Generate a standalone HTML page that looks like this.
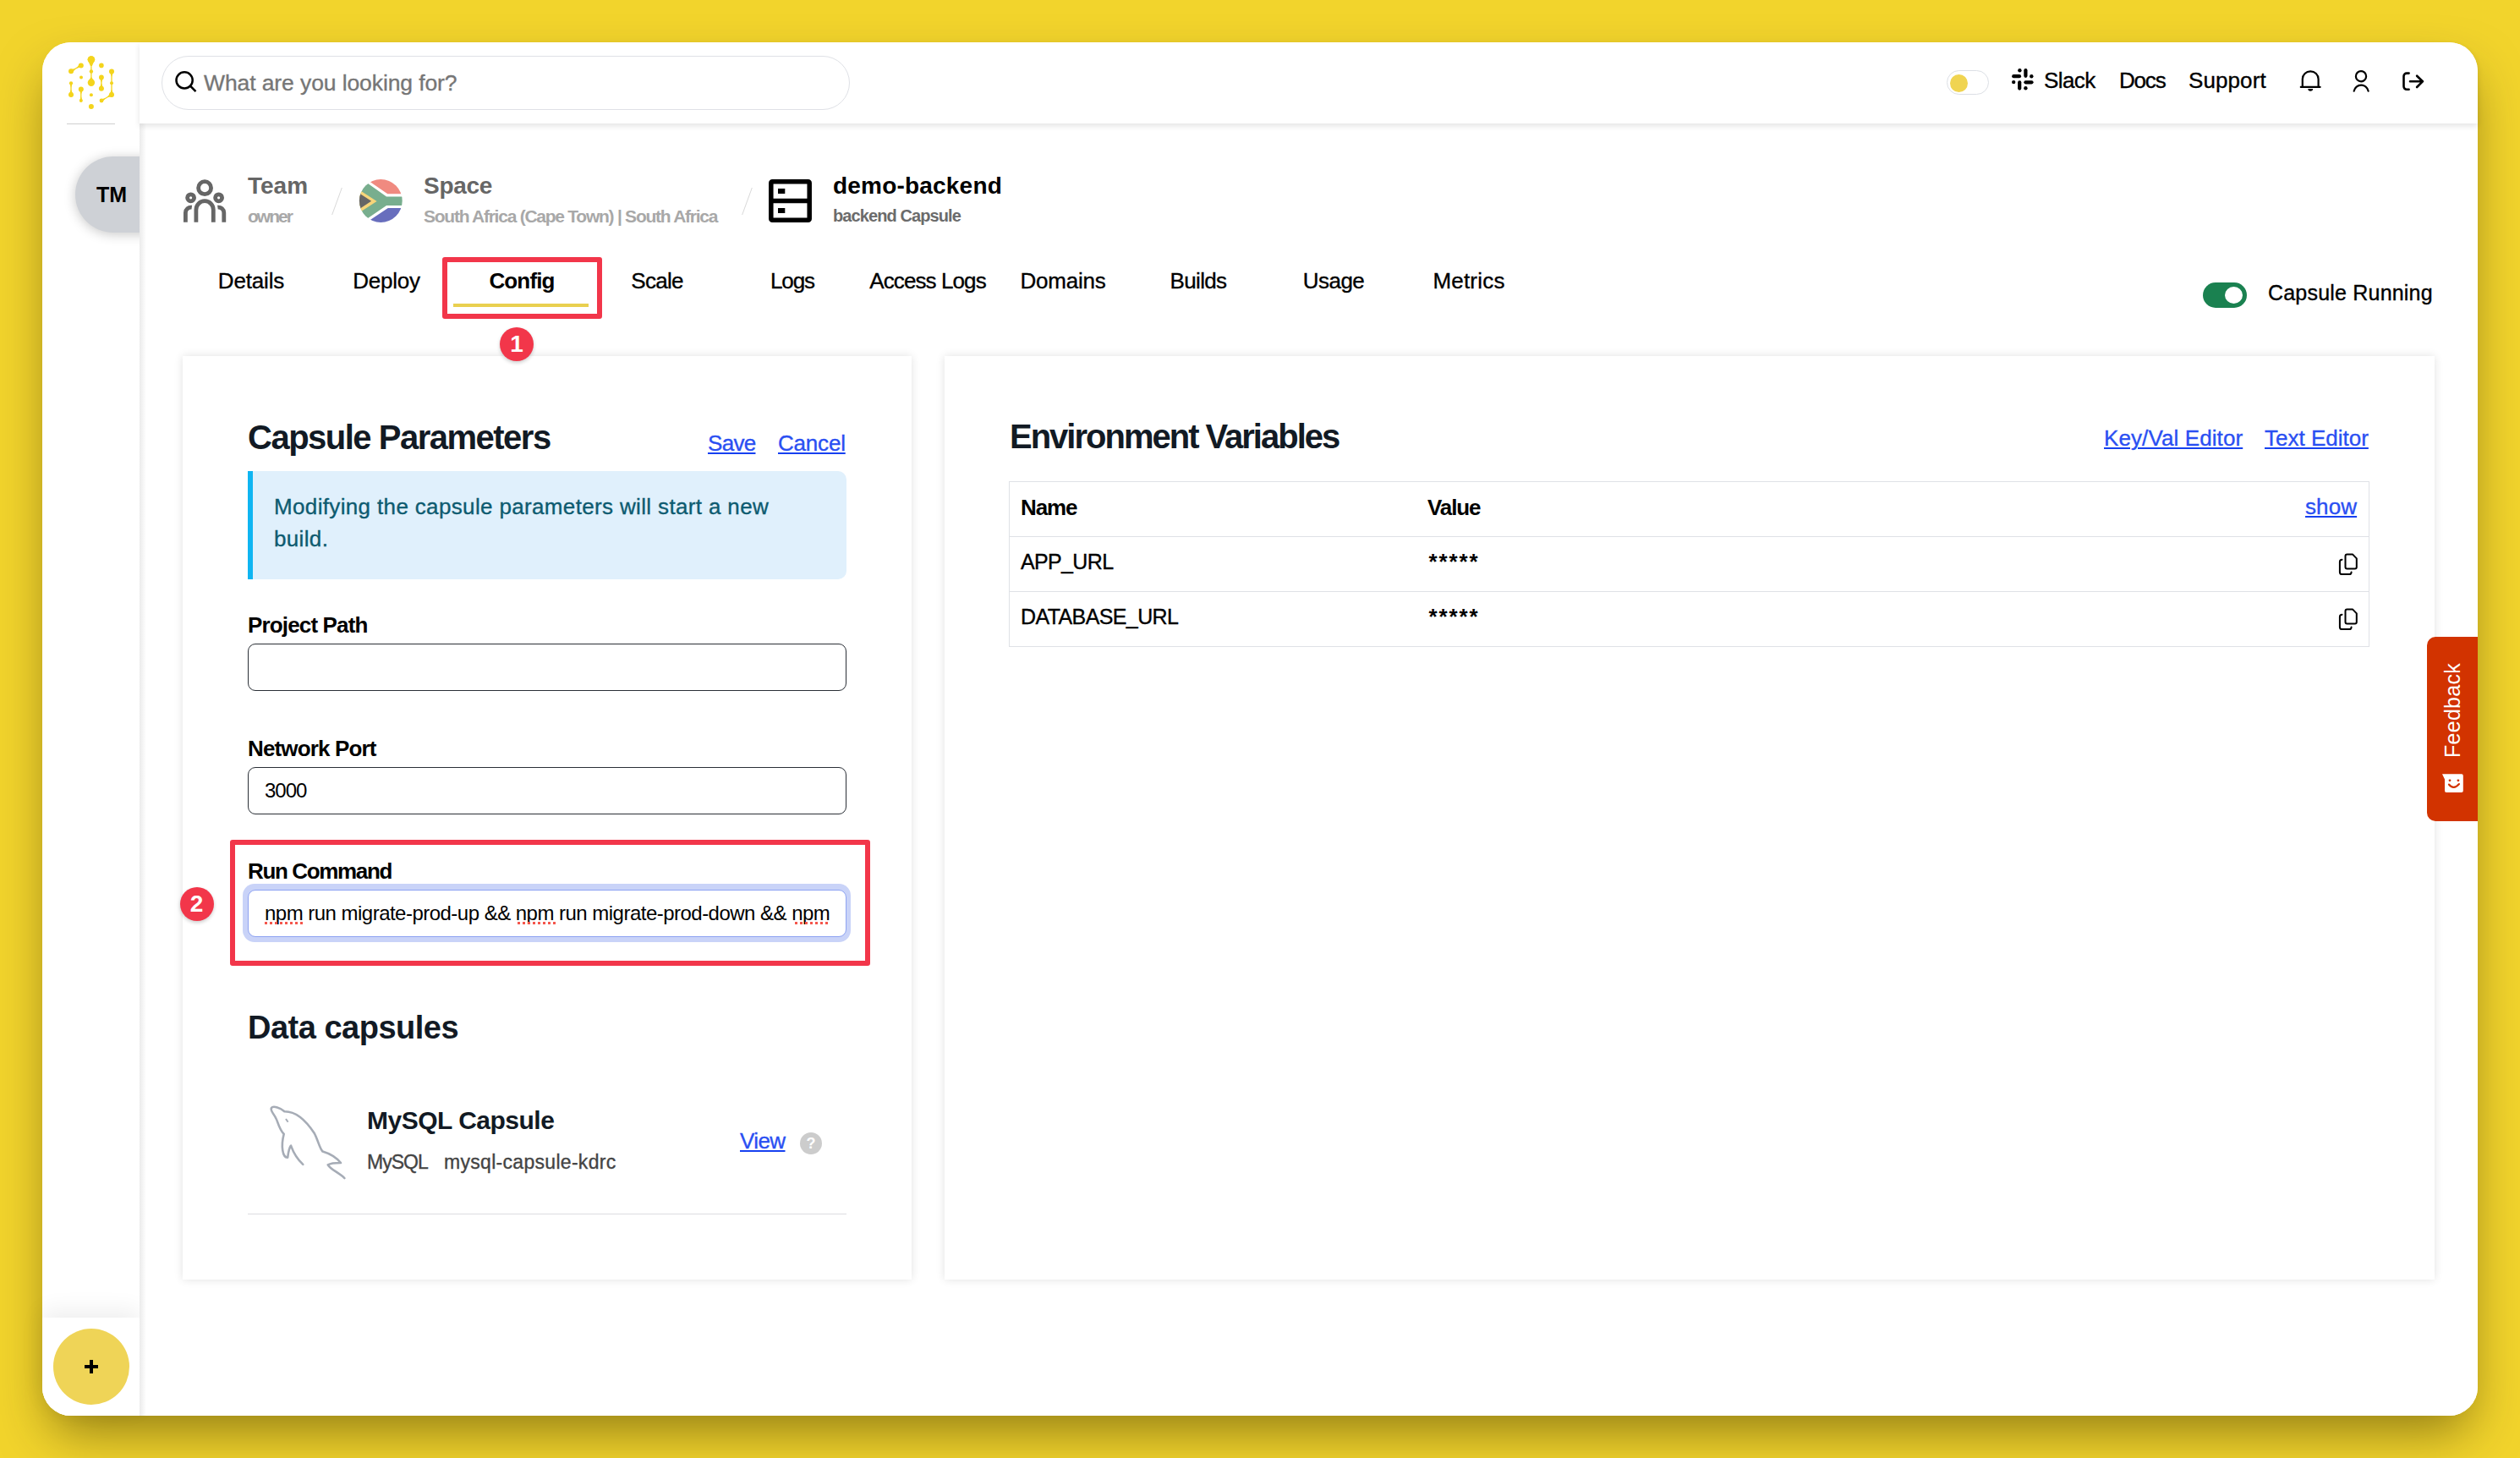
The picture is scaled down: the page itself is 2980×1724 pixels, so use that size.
<!DOCTYPE html>
<html><head><meta charset="utf-8">
<style>
html,body{margin:0;padding:0}
body{width:2980px;height:1724px;overflow:hidden;background:#f2d42c;position:relative;font-family:"Liberation Sans",sans-serif;color:#111}
.a{position:absolute}
.t{position:absolute;white-space:nowrap;line-height:1;font-family:"Liberation Sans",sans-serif}
.b{font-weight:700}
.t:not(.b){-webkit-text-stroke:0.35px currentColor}
.win{left:50px;top:50px;width:2880px;height:1624px;border-radius:34px;background:#fff;box-shadow:0 28px 60px -10px rgba(50,40,0,.5)}
.side{left:50px;top:50px;width:115px;height:1624px;border-radius:34px 0 0 34px;background:#fff}
.hdr{left:165px;top:50px;width:2765px;height:96px;background:#fff;border-radius:0 34px 0 0;box-shadow:0 3px 7px rgba(0,0,0,.11)}
.card{background:#fff;box-shadow:0 0 10px rgba(0,0,0,.12)}
.lnk{color:#2a4ff2;text-decoration:underline;text-decoration-color:#1640f0;text-decoration-thickness:2px;text-underline-offset:2px}
</style></head><body>
<div class="a win"></div>
<div class="a side"></div>
<!-- SIDEBAR -->
<svg class="a" style="left:70px;top:56px" width="80" height="80" viewBox="70 56 80 80">
<g fill="#f4d41c" stroke="#f4d41c">
<line x1="107.9" y1="70.5" x2="107.9" y2="98" stroke-width="1.3"/>
<line x1="95.8" y1="77.4" x2="84" y2="84.3" stroke-width="1.3"/>
<line x1="119.9" y1="91.4" x2="119.9" y2="104.8" stroke-width="1.3"/>
<line x1="132" y1="84.5" x2="132" y2="112" stroke-width="1.3"/>
<line x1="132" y1="112" x2="120" y2="119" stroke-width="1.3"/>
<line x1="84" y1="98.3" x2="84" y2="112" stroke-width="1.3"/>
<line x1="95.8" y1="105.4" x2="95.8" y2="119" stroke-width="1.3"/>
<g stroke="none">
<path d="M103.6 70.5 A4.3 4.3 0 1 1 112.2 70.5 L108.9 78 L106.9 78 Z"/>
<circle cx="107.9" cy="70.5" r="4.3"/>
<circle cx="107.9" cy="84.5" r="2.2"/>
<circle cx="107.9" cy="97.8" r="4.2"/>
<path d="M105 95 L107.9 91 L110.8 95 Z"/>
<circle cx="95.8" cy="77.4" r="3"/>
<circle cx="84" cy="84.3" r="3"/>
<circle cx="96" cy="91.4" r="2"/>
<circle cx="119.9" cy="77.4" r="2.8"/>
<circle cx="119.9" cy="91.4" r="2.9"/>
<circle cx="119.9" cy="104.8" r="3"/>
<circle cx="132" cy="84.5" r="3"/>
<circle cx="132" cy="98.3" r="2"/>
<circle cx="132" cy="112" r="3"/>
<circle cx="120" cy="119" r="2.4"/>
<circle cx="84" cy="98.3" r="2.1"/>
<circle cx="84" cy="112" r="3"/>
<circle cx="95.8" cy="105.4" r="3"/>
<circle cx="95.8" cy="119" r="2"/>
<circle cx="107.9" cy="112.2" r="2"/>
<circle cx="107.9" cy="126" r="3"/>
<polygon points="94.51,75.20 90.45,80.53 97.09,79.60"/>
<polygon points="85.29,86.50 89.35,81.17 82.71,82.10"/>
<polygon points="117.44,91.40 119.90,97.50 122.37,91.40"/>
<polygon points="122.45,104.80 119.90,98.60 117.35,104.80"/>
<polygon points="129.45,84.50 132.00,90.70 134.55,84.50"/>
<polygon points="134.55,112.00 132.00,105.80 129.45,112.00"/>
<polygon points="130.72,109.80 126.64,115.12 133.28,114.20"/>
<polygon points="121.03,120.76 124.84,116.18 118.97,117.24"/>
<polygon points="82.22,98.30 84.00,103.60 85.78,98.30"/>
<polygon points="86.55,112.00 84.00,105.80 81.45,112.00"/>
<polygon points="93.25,105.40 95.80,111.60 98.35,105.40"/>
<polygon points="97.50,119.00 95.80,113.80 94.10,119.00"/>
</g></g></svg>
<div class="a" style="left:79px;top:146px;width:57px;height:1px;background:#cfcfcf"></div>
<div class="a" style="left:89px;top:185px;width:110px;height:90px;border-radius:45px 0 0 45px;background:#ced1d6;box-shadow:0 2px 14px rgba(0,0,0,.22)"></div>
<div class="t b" style="left:114px;top:217.8px;font-size:25px;color:#000">TM</div>
<div class="a" style="left:50px;top:1558px;width:115px;height:116px;border-radius:0 0 0 34px;background:#fff;box-shadow:0 -8px 28px rgba(0,0,0,.07)"></div>
<div class="a" style="left:63px;top:1571px;width:90px;height:90px;border-radius:45px;background:#efd457"></div>
<div class="a" style="left:100px;top:1614px;width:16px;height:3.5px;background:#000"></div>
<div class="a" style="left:106.3px;top:1607.5px;width:3.5px;height:16px;background:#000"></div>

<!-- MAIN BG (covers avatar overflow) -->
<div class="a" style="left:165px;top:146px;width:2765px;height:1528px;background:#fff;border-radius:0 0 34px 0"></div>
<div class="a" style="left:165px;top:146px;width:8px;height:1528px;background:linear-gradient(90deg,#ebebeb,rgba(255,255,255,0))"></div>

<!-- HEADER -->
<div class="a hdr"></div>
<div class="a" style="left:191px;top:66px;width:814px;height:64px;box-sizing:border-box;border:1.5px solid #dfe1e6;border-radius:32px;background:#fff"></div>
<svg class="a" style="left:195px;top:70px" width="50" height="50" viewBox="195 70 50 50"><circle cx="218.1" cy="94.9" r="9.6" fill="none" stroke="#000" stroke-width="2.5"/><line x1="225.3" y1="102" x2="230.6" y2="107.3" stroke="#000" stroke-width="2.5" stroke-linecap="square"/></svg>
<div class="t" style="left:241px;top:84.6px;font-size:26.5px;color:#767676;letter-spacing:-0.1px">What are you looking for?</div>

<div class="a" style="left:2302px;top:83px;width:50px;height:29px;box-sizing:border-box;border:1px solid #dcdfe5;border-radius:15px;background:#fff"></div>
<div class="a" style="left:2306px;top:88px;width:21px;height:21px;border-radius:50%;background:#f0d451"></div>
<svg class="a" style="left:2370px;top:70px" width="50" height="50" viewBox="0 0 50 50"><g stroke="#000" stroke-width="4.2" stroke-linecap="round" fill="#000">
<line x1="25.4" y1="13.2" x2="25.4" y2="19.8"/>
<line x1="11.2" y1="20.2" x2="18" y2="20.2"/>
<line x1="18.2" y1="27.3" x2="18.2" y2="34.6"/>
<line x1="25.4" y1="27.3" x2="32.5" y2="27.3"/>
<circle cx="18.4" cy="13.2" r="2.2" stroke="none"/>
<circle cx="32.3" cy="20.2" r="2.2" stroke="none"/>
<circle cx="11.2" cy="27.1" r="2.2" stroke="none"/>
<circle cx="25.4" cy="34.3" r="2.2" stroke="none"/>
</g></svg>
<div class="t" style="left:2417px;top:82px;font-size:26px;color:#000;letter-spacing:-0.6px">Slack</div>
<div class="t" style="left:2506px;top:82px;font-size:26px;color:#000;letter-spacing:-1.2px">Docs</div>
<div class="t" style="left:2588px;top:82px;font-size:26px;color:#000;letter-spacing:0.1px">Support</div>
<svg class="a" style="left:2710px;top:70px" width="170" height="50" viewBox="0 0 170 50"><g fill="none" stroke="#000" stroke-width="2.2" stroke-linecap="round" stroke-linejoin="round">
<path d="M12.8 32.2 V23.5 A9.4 9.2 0 0 1 31.6 23.5 V32.2 M10.8 32.9 H33.6"/>
<path d="M19.3 35 H25.1 A2.9 2.7 0 0 1 19.3 35 Z" fill="#000" stroke="none"/>
<circle cx="82" cy="20.2" r="6.1"/>
<path d="M73.7 37.6 A8.6 8.6 0 0 1 90.6 37.6"/>
<path d="M138.6 16.6 H136 A3.5 3.5 0 0 0 132.5 20.1 V32.3 A3.5 3.5 0 0 0 136 35.8 H138.6" stroke-width="2.6"/>
<path d="M140 26.3 H155 M148.1 19.7 L154.8 26.3 L148.1 33" stroke-width="2.6"/>
</g></svg>

<!-- BREADCRUMB -->
<svg class="a" style="left:210px;top:205px" width="65" height="65" viewBox="0 0 65 65"><g fill="none" stroke="#666" stroke-width="4.8">
<circle cx="32.1" cy="17.2" r="7.5"/>
<circle cx="15.6" cy="28.8" r="4"/>
<circle cx="48.6" cy="28.8" r="4"/>
<path d="M21.9 57.7 V42.9 A10.2 10.2 0 0 1 42.3 42.9 V57.7"/>
<path d="M9.4 57.7 V46.5 A6.5 6.5 0 0 1 16.8 40.2"/>
<path d="M54.8 57.7 V46.5 A6.5 6.5 0 0 0 47.4 40.2"/>
</g></svg>
<div class="t b" style="left:293px;top:206.3px;font-size:28px;color:#666">Team</div>
<div class="t b" style="left:293px;top:245.2px;font-size:21px;color:#a8a8a8;letter-spacing:-2px">owner</div>
<div class="a" style="left:398px;top:222px;width:1px;height:32px;background:#d8d8d8;transform:skewX(-20deg)"></div>
<svg class="a" style="left:420px;top:205px" width="65" height="65" viewBox="0 0 65 65">
<defs><clipPath id="fc"><circle cx="30.3" cy="32.5" r="25.4"/></clipPath></defs>
<g clip-path="url(#fc)">
<rect x="0" y="0" width="65" height="65" fill="#fff"/>
<polygon points="3.1,0 38.3,24.3 65,24.3 65,0" fill="#f08a80"/>
<polygon points="2.8,65 38.8,41 65,41 65,65" fill="#686ebd"/>
<polygon points="0,1.3 37,27.4 65,27.4 65,37.9 37,37.9 0,63.4" fill="#78ae8e"/>
<polygon points="0,16.4 25.6,33 0,49.6" fill="#f7d57a"/>
<polygon points="0,20.3 19.2,32.8 0,45.3" fill="#666"/>
</g></svg>
<div class="t b" style="left:501px;top:206.3px;font-size:28px;color:#666;letter-spacing:-0.3px">Space</div>
<div class="t b" style="left:501px;top:245.2px;font-size:21px;color:#a8a8a8;letter-spacing:-1.25px">South Africa (Cape Town) | South Africa</div>
<div class="a" style="left:883px;top:222px;width:1px;height:32px;background:#d8d8d8;transform:skewX(-20deg)"></div>
<svg class="a" style="left:905px;top:208px" width="60" height="60" viewBox="0 0 60 60"><g fill="none" stroke="#000" stroke-width="5.5" stroke-linejoin="round">
<rect x="6.8" y="6.8" width="45.4" height="45.4" rx="1.5"/>
<line x1="6.8" y1="29.5" x2="52.2" y2="29.5"/>
</g><rect x="15" y="15" width="8.3" height="6" fill="#000"/><rect x="15" y="38" width="8.3" height="6" fill="#000"/></svg>
<div class="t b" style="left:985px;top:206.3px;font-size:28px;color:#000;letter-spacing:0.2px">demo-backend</div>
<div class="t b" style="left:985px;top:245.1px;font-size:20px;color:#6b6b6b;letter-spacing:-0.9px">backend Capsule</div>

<!-- TABS -->
<div class="t" style="left:217px;top:319px;width:160px;text-align:center;font-size:26px;color:#000;letter-spacing:-0.15px">Details</div>
<div class="t" style="left:377px;top:319px;width:160px;text-align:center;font-size:26px;color:#000;letter-spacing:-0.2px">Deploy</div>
<div class="t b" style="left:537px;top:319px;width:160px;text-align:center;font-size:26px;color:#000;letter-spacing:-0.85px">Config</div>
<div class="t" style="left:697px;top:319px;width:160px;text-align:center;font-size:26px;color:#000;letter-spacing:-0.75px">Scale</div>
<div class="t" style="left:857px;top:319px;width:160px;text-align:center;font-size:26px;color:#000;letter-spacing:-1.1px">Logs</div>
<div class="t" style="left:1017px;top:319px;width:160px;text-align:center;font-size:26px;color:#000;letter-spacing:-0.9px">Access Logs</div>
<div class="t" style="left:1177px;top:319px;width:160px;text-align:center;font-size:26px;color:#000;letter-spacing:-0.25px">Domains</div>
<div class="t" style="left:1337px;top:319px;width:160px;text-align:center;font-size:26px;color:#000;letter-spacing:-0.65px">Builds</div>
<div class="t" style="left:1497px;top:319px;width:160px;text-align:center;font-size:26px;color:#000;letter-spacing:-0.5px">Usage</div>
<div class="t" style="left:1657px;top:319px;width:160px;text-align:center;font-size:26px;color:#000;letter-spacing:0.2px">Metrics</div>
<div class="a" style="left:536px;top:359px;width:160px;height:4px;background:#e9d04f"></div>

<div class="a" style="left:2605px;top:334px;width:52px;height:30px;border-radius:15px;background:#1a8150"></div>
<div class="a" style="left:2631px;top:339px;width:21px;height:20px;border-radius:50%;background:#fff"></div>
<div class="t" style="left:2682px;top:333.8px;font-size:25px;color:#000;letter-spacing:0.2px">Capsule Running</div>

<!-- LEFT CARD -->
<div class="a card" style="left:216px;top:421px;width:862px;height:1092px"></div>
<div class="t b" style="left:293px;top:497.1px;font-size:40px;color:#121a24;letter-spacing:-1.5px">Capsule Parameters</div>
<div class="t lnk" style="left:837px;top:511px;font-size:26px;letter-spacing:-0.7px">Save</div>
<div class="t lnk" style="left:920px;top:511px;font-size:26px;letter-spacing:-0.2px">Cancel</div>
<div class="a" style="left:293px;top:557px;width:708px;height:128px;background:#e0f0fc;border-left:6px solid #0fb5f2;border-radius:0 10px 10px 0;box-sizing:border-box"></div>
<div class="t" style="left:324px;top:585.5px;font-size:26px;color:#0d5b70;letter-spacing:0.35px">Modifying the capsule parameters will start a new</div>
<div class="t" style="left:324px;top:624px;font-size:26px;color:#0d5b70;letter-spacing:0.35px">build.</div>

<div class="t b" style="left:293px;top:726px;font-size:26px;color:#000;letter-spacing:-0.85px">Project Path</div>
<div class="a" style="left:293px;top:761px;width:708px;height:56px;box-sizing:border-box;border:1.5px solid #2a2f36;border-radius:9px;background:#fff"></div>
<div class="t b" style="left:293px;top:872px;font-size:26px;color:#000;letter-spacing:-0.85px">Network Port</div>
<div class="a" style="left:293px;top:907px;width:708px;height:56px;box-sizing:border-box;border:1.5px solid #2a2f36;border-radius:9px;background:#fff"></div>
<div class="t" style="left:313px;top:922.7px;font-size:24px;color:#000;letter-spacing:-1px;-webkit-text-stroke:0">3000</div>

<div class="t b" style="left:293px;top:1017px;font-size:26px;color:#000;letter-spacing:-1.35px">Run Command</div>
<div class="a" style="left:287px;top:1045px;width:719px;height:69px;border-radius:14px;background:#c9d3f8"></div>
<div class="a" style="left:293px;top:1052px;width:708px;height:56px;box-sizing:border-box;border:1.5px solid #8ea3f2;border-radius:9px;background:#fff"></div>
<div class="a" style="left:313px;top:1060px;width:668px;height:40px;overflow:hidden">
<div class="t" style="left:0;top:7.5px;font-size:24px;color:#000;letter-spacing:-0.52px;-webkit-text-stroke:0">npm run migrate-prod-up &amp;&amp; npm run migrate-prod-down &amp;&amp; npm run migrate-prod-up</div>
</div>
<div class="a" style="left:313px;top:1090px;width:45px;height:3px;background-image:linear-gradient(90deg,#f4564c 50%,transparent 50%);background-size:6px 3px"></div>
<div class="a" style="left:612px;top:1090px;width:45px;height:3px;background-image:linear-gradient(90deg,#f4564c 50%,transparent 50%);background-size:6px 3px"></div>
<div class="a" style="left:940px;top:1090px;width:40px;height:3px;background-image:linear-gradient(90deg,#f4564c 50%,transparent 50%);background-size:6px 3px"></div>

<div class="t b" style="left:293px;top:1196.4px;font-size:38px;color:#121a24;letter-spacing:-0.5px">Data capsules</div>
<svg class="a" style="left:310px;top:1295px" width="110" height="110" viewBox="0 0 110 110"><path fill="none" stroke="#a6acb6" stroke-width="2.6" stroke-linejoin="round" stroke-linecap="round" d="M48.3 81.9 C42 76 37 68 34 59.6 C31.5 63 30.8 69 30.2 73.6 C24 74 22 60 25.7 46 C20 40 18 30 16.6 27.9 C14 22 9 18 11 15 C13 12 22 15 26.4 19.2 C40 19 52 30 61.9 45.3 C66 53 68 63 71.5 66.5 C80 69 88 74 93 80 C86 80 80 81 77.7 82.3 C81 88 90 91 97.4 98.1"/><path d="M28 28 L30.6 31.7" stroke="#a6acb6" stroke-width="2"/></svg>
<div class="t b" style="left:434px;top:1310.3px;font-size:30px;color:#121a24;letter-spacing:-0.5px">MySQL Capsule</div>
<div class="t" style="left:434px;top:1363px;font-size:23px;color:#444;letter-spacing:-1px">MySQL</div>
<div class="t" style="left:525px;top:1363px;font-size:23px;color:#444;letter-spacing:0.3px">mysql-capsule-kdrc</div>
<div class="t lnk" style="left:875px;top:1336px;font-size:26px;letter-spacing:-0.6px">View</div>
<div class="a" style="left:946px;top:1338.5px;width:26px;height:26px;border-radius:50%;background:#cccccc"></div>
<div class="t b" style="left:946px;top:1343px;width:26px;text-align:center;font-size:18px;color:#fff">?</div>
<div class="a" style="left:293px;top:1434.5px;width:708px;height:1.5px;background:#dcdde0"></div>

<!-- BADGES / RED BOXES -->
<div class="a" style="left:522.5px;top:304px;width:189.5px;height:73px;box-sizing:border-box;border:6.5px solid #f2364a;border-radius:3px"></div>
<div class="a" style="left:591px;top:387px;width:40px;height:40px;border-radius:50%;background:#f2364a;box-shadow:0 2px 4px rgba(0,0,0,.2)"></div>
<div class="t b" style="left:591px;top:393px;width:40px;text-align:center;font-size:28px;color:#fff">1</div>
<div class="a" style="left:271.5px;top:992.5px;width:757.5px;height:149px;box-sizing:border-box;border:6.5px solid #f2364a;border-radius:3px"></div>
<div class="a" style="left:212.5px;top:1048.5px;width:40px;height:40px;border-radius:50%;background:#f2364a;box-shadow:0 2px 4px rgba(0,0,0,.2)"></div>
<div class="t b" style="left:212.5px;top:1054.5px;width:40px;text-align:center;font-size:28px;color:#fff">2</div>

<!-- RIGHT CARD -->
<div class="a card" style="left:1117px;top:421px;width:1762px;height:1092px"></div>
<div class="t b" style="left:1194px;top:496.1px;font-size:40px;color:#121a24;letter-spacing:-2px">Environment Variables</div>
<div class="t lnk" style="left:2488px;top:505.4px;font-size:26px;letter-spacing:0.1px">Key/Val Editor</div>
<div class="t lnk" style="left:2678px;top:505.4px;font-size:26px;letter-spacing:0px">Text Editor</div>
<div class="a" style="left:1193px;top:569px;width:1609px;height:196px;box-sizing:border-box;border:1.5px solid #dfe1e6"></div>
<div class="a" style="left:1193px;top:633.5px;width:1609px;height:1.5px;background:#dfe1e6"></div>
<div class="a" style="left:1193px;top:698.5px;width:1609px;height:1.5px;background:#dfe1e6"></div>
<div class="t b" style="left:1207px;top:587px;font-size:26px;color:#000;letter-spacing:-1.1px">Name</div>
<div class="t b" style="left:1688px;top:587px;font-size:26px;color:#000;letter-spacing:-1.1px">Value</div>
<div class="t lnk" style="left:2726px;top:586px;font-size:26px;letter-spacing:0.1px">show</div>
<div class="t" style="left:1207px;top:651.8px;font-size:25px;color:#000;letter-spacing:-0.65px">APP_URL</div>
<div class="t b" style="left:1689.5px;top:650.5px;font-size:26px;color:#000;letter-spacing:1.9px">*****</div>
<div class="t" style="left:1207px;top:716.8px;font-size:25px;color:#000;letter-spacing:-0.6px">DATABASE_URL</div>
<div class="t b" style="left:1689.5px;top:715.5px;font-size:26px;color:#000;letter-spacing:1.9px">*****</div>
<svg class="a" style="left:2755px;top:645px" width="45" height="45" viewBox="0 0 45 45"><g fill="none" stroke="#000" stroke-width="2" stroke-linecap="round" stroke-linejoin="round"><path d="M20.5 10.6 H27.2 L31.8 15.4 V25.5 A2 2 0 0 1 29.8 27.5 H20.5 A2 2 0 0 1 18.5 25.5 V12.6 A2 2 0 0 1 20.5 10.6 Z"/><path d="M14.5 16.8 A2.6 2.6 0 0 0 11.9 19.4 V31.4 A2.6 2.6 0 0 0 14.5 34 H23 A2.6 2.6 0 0 0 25.6 31.4"/></g></svg>
<svg class="a" style="left:2755px;top:710px" width="45" height="45" viewBox="0 0 45 45"><g fill="none" stroke="#000" stroke-width="2" stroke-linecap="round" stroke-linejoin="round"><path d="M20.5 10.6 H27.2 L31.8 15.4 V25.5 A2 2 0 0 1 29.8 27.5 H20.5 A2 2 0 0 1 18.5 25.5 V12.6 A2 2 0 0 1 20.5 10.6 Z"/><path d="M14.5 16.8 A2.6 2.6 0 0 0 11.9 19.4 V31.4 A2.6 2.6 0 0 0 14.5 34 H23 A2.6 2.6 0 0 0 25.6 31.4"/></g></svg>

<!-- FEEDBACK -->
<div class="a" style="left:2869.5px;top:753px;width:60.5px;height:218px;border-radius:10px 0 0 10px;background:#d23300"></div>
<div class="t" style="left:2899.5px;top:840px;font-size:25px;color:#fff;transform:translate(-50%,-50%) rotate(-90deg);letter-spacing:0.3px;-webkit-text-stroke:0">Feedback</div>
<svg class="a" style="left:2880px;top:905px" width="40" height="40" viewBox="0 0 40 40"><path d="M8 10.3 H31 A2 2 0 0 1 32.8 12.3 V30 A2 2 0 0 1 30.8 32.1 H13 A2 2 0 0 1 11 30 V16.5 Z" fill="#fff"/><circle cx="17" cy="17.8" r="1.4" fill="#d23300"/><circle cx="26.9" cy="17.8" r="1.4" fill="#d23300"/><path d="M15.9 22.5 Q21.5 29.5 28 22" fill="none" stroke="#d23300" stroke-width="2.1" stroke-linecap="round"/></svg>


</body></html>
